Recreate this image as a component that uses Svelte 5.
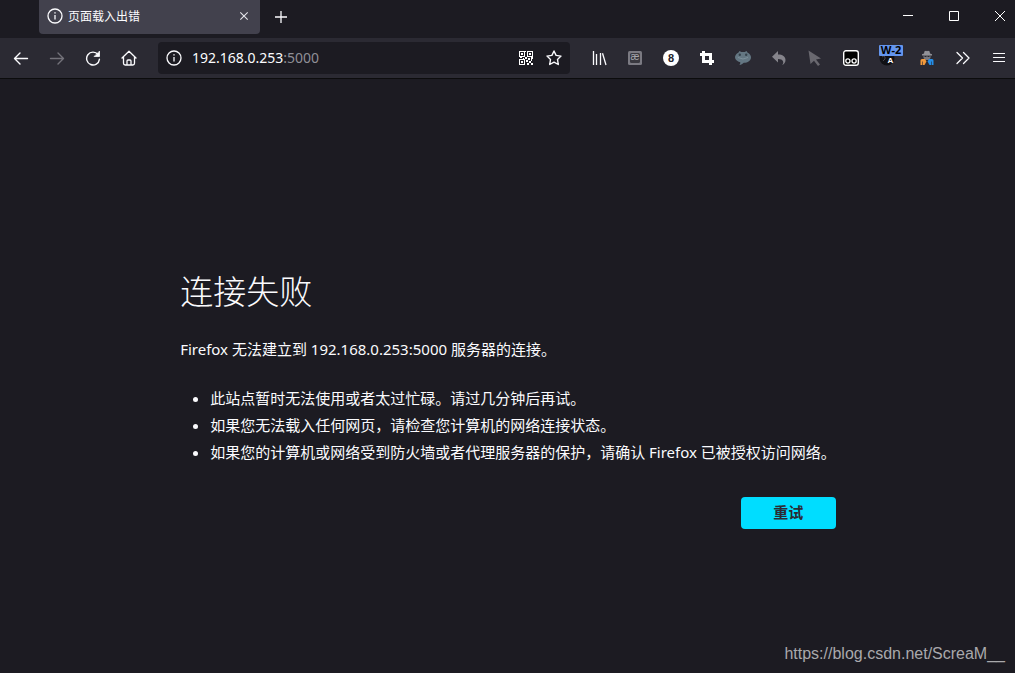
<script>
  const host = '192.168.0.253';
  const port = '5000';
  const reasons = [
    '此站点暂时无法使用或者太过忙碌。请过几分钟后再试。',
    '如果您无法载入任何网页，请检查您计算机的网络连接状态。',
    '如果您的计算机或网络受到防火墙或者代理服务器的保护，请确认 Firefox 已被授权访问网络。'
  ];
</script>

{#snippet info()}
  <svg width="16" height="16" viewBox="0 0 16 16" fill="none" stroke="#fbfbfe" aria-hidden="true">
    <circle cx="8" cy="8" r="7" stroke-width="1.3" />
    <path d="M8 7v4.5" stroke-width="1.3" />
    <path d="M8 4.2v1.4" stroke-width="1.4" />
  </svg>
{/snippet}

<div class="browser">
  <header>
    <div class="titlebar">
      <div class="tab">
        {@render info()}
        <span class="tab-title">页面载入出错</span>
        <button class="tab-close" aria-label="关闭标签页">
          <svg width="10" height="10" viewBox="0 0 10 10" stroke="#e4e4ea" stroke-width="1.1"><path d="M1.3 1.3l7.4 7.4M8.7 1.3L1.3 8.7" /></svg>
        </button>
      </div>
      <button class="new-tab" aria-label="新建标签页">
        <svg width="14" height="14" viewBox="0 0 14 14" stroke="#fbfbfe" stroke-width="1.3"><path d="M7 1v12M1 7h12" /></svg>
      </button>
      <div class="window-controls">
        <button aria-label="最小化"><svg width="10" height="10" viewBox="0 0 10 10" fill="#fff"><path d="M0 4h10v1H0z" /></svg></button>
        <button aria-label="最大化"><svg width="10" height="10" viewBox="0 0 10 10" fill="none" stroke="#fff"><path d="M.5.5h9v9h-9z" /></svg></button>
        <button class="close" aria-label="关闭"><svg width="10" height="10" viewBox="0 0 10 10" stroke="#fff"><path d="M0 0l10 10M10 0L0 10" /></svg></button>
      </div>
    </div>

    <nav class="toolbar" aria-label="导航">
      <div class="group nav-buttons">
        <button aria-label="后退"><svg width="16" height="16" viewBox="0 0 16 16" fill="none" stroke="#fbfbfe" stroke-width="1.4" stroke-linecap="round" stroke-linejoin="round"><path d="M14.5 8.500H1.5M7 3L1.5 8.500 7 14" /></svg></button>
        <button aria-label="前进" disabled><svg width="16" height="16" viewBox="0 0 16 16" fill="none" stroke="#73727a" stroke-width="1.4" stroke-linecap="round" stroke-linejoin="round"><path d="M1.5 8.500h13M9 3L14.5 8.500 9 14" /></svg></button>
        <button aria-label="重新载入"><svg width="16" height="16" viewBox="0 0 16 16" fill="none" stroke="#fbfbfe" stroke-width="1.4" stroke-linecap="round"><path d="M13 4.5A6.4 6.4 0 1 0 14.4 9.300" /><path d="M14.5 1.5v5h-5z" fill="#fbfbfe" stroke-width=".8" stroke-linejoin="round" /></svg></button>
        <button aria-label="主页"><svg width="16" height="16" viewBox="0 0 16 16" fill="none" stroke="#fbfbfe" stroke-width="1.3" stroke-linecap="round" stroke-linejoin="round"><path d="M1 8l7-6.8L15 8M2.5 7v6.3q0 1.7 1.7 1.7h7.6q1.7 0 1.7-1.7V7M6 15v-4q0-1 1-1h2q1 0 1 1v4" /></svg></button>
      </div>

      <div class="urlbar">
        {@render info()}
        <span class="address"><span class="host">{host}</span>:{port}</span>
        <button class="page-action" aria-label="二维码">
          <svg width="14" height="14" viewBox="0 0 14 14" fill="#fff" shape-rendering="crispEdges">
            <path fill-rule="evenodd" d="M0 0h6v6H0zM1 1v4h4V1zM8 0h6v6H8zM9 1v4h4V1zM0 8h6v6H0zM1 9v4h4V9z" />
            <path d="M2 2h2v2H2zM10 2h2v2h-2zM2 10h2v2H2zM6 0h1v1H6zM6 6h2v2H6zM1 6h2v1H1zM4 7h1v1H4zM9 7h2v2H9zM12 6h2v2h-2zM7 9h2v2H7zM10 10h2v2h-2zM12 8h1v2h-1zM8 12h2v2H8zM12 12h2v2h-2z" />
          </svg>
        </button>
        <button class="page-action" aria-label="添加书签">
          <svg width="16" height="16" viewBox="0 0 16 16" fill="none" stroke="#fbfbfe" stroke-width="1.4" stroke-linejoin="round"><path d="M8 1l2.1 4.4 4.9.7-3.5 3.4.8 5L8 12.1l-4.3 2.4.8-5L1 6.1l4.900-.7z" /></svg>
        </button>
      </div>

      <div class="group">
        <button aria-label="书库"><svg width="16" height="16" viewBox="0 0 16 16" fill="none" stroke="#fbfbfe" stroke-width="1.3"><path d="M2.500 1v14M5.500 4v11M9.500 3v12M11.500 3.2L15 15" /></svg></button>
        <button aria-label="词典">
          <svg width="14" height="14" viewBox="0 0 14 14"><rect width="14" height="14" rx="1.5" fill="#7b7a82" /><rect x="2" y="2" width="10" height="10" rx="1.500" fill="#39383f" /><text x="7" y="9" text-anchor="middle" font-size="10" fill="#a5a4ab" font-family="Liberation Sans">æ</text></svg>
        </button>
        <button aria-label="扩展 8">
          <svg width="16" height="16" viewBox="0 0 16 16"><circle cx="8" cy="8" r="8" fill="#fff" /><text x="8" y="12" text-anchor="middle" font-size="11" font-weight="700" fill="#222129" font-family="Liberation Sans">8</text></svg>
        </button>
        <button aria-label="截图"><svg width="14" height="14" viewBox="0 0 14 14" fill="none" stroke="#fff" stroke-width="3"><path d="M0 3.5h10.5V14M3.5 0v10.5H14" /></svg></button>
        <button aria-label="聊天"><svg width="16" height="16" viewBox="0 0 16 16"><path d="M4.500 1l1.800 1h3.400l1.800-1 1.200 1.700C14.700 3.700 16 5.300 16 7.200c0 3.200-3.200 5.500-7.200 5.600-1.200 1.200-2.600 2.100-4.400 2.300.7-.8 1-1.800.9-2.900C2.200 11.300 0 9.600 0 7.200c0-1.900 1.300-3.500 3.300-4.500z" fill="#647783" /><circle cx="4.800" cy="4.800" r="1.200" fill="#35424c" /><circle cx="11.200" cy="4.800" r="1.200" fill="#35424c" /><path d="M3 7.500q5 3 10 0" fill="none" stroke="#7d919c" /></svg></button>
        <button aria-label="撤销"><svg width="16" height="16" viewBox="0 0 16 16" fill="#85848b"><path d="M7 1v3.500c4.500 0 7.500 2 7.500 5.500 0 2.300-1.300 4.200-3.300 5 1-1.300 1.300-2.500.8-3.800C11.400 9.700 9.700 9 7 9v3.500L1 6.700z" /></svg></button>
        <button aria-label="手势"><svg width="16" height="16" viewBox="0 0 16 16" fill="#69686f"><path d="M1.500.5L14 8.500l-5 1 4 5-2 1.500-4-5.200L3.500 14z" /></svg></button>
        <button aria-label="脚本管理器"><svg width="16" height="16" viewBox="0 0 16 16"><rect x=".7" y=".7" width="14.600" height="14.600" rx="2.300" fill="#000" stroke="#fff" stroke-width="1.400" /><g fill="#000" stroke="#fff" stroke-width="1.300"><circle cx="4.900" cy="11" r="2.100" /><circle cx="11.100" cy="11" r="2.100" /></g></svg></button>
        <button class="badged" aria-label="翻译">
          <svg width="16" height="16" viewBox="0 0 16 16"><circle cx="8" cy="8" r="7.500" fill="#101014" /><path d="M3 7q2-2 3 0T4 11" stroke="#45454e" fill="none" /><text x="11.500" y="12.500" text-anchor="middle" font-size="8" font-weight="700" fill="#fff" font-family="Liberation Sans">A</text></svg>
          <span class="badge">W-2</span>
        </button>
        <button aria-label="代理身份"><svg width="16" height="16" viewBox="0 0 16 16"><path d="M5 3.500l.5-2.300 1.500-.5 1 .5 1-.5 1.500.5.5 2.300 2 .7v1.300H3V4.200z" fill="#929298" /><path d="M4.500 5.500h7v2.500L9.800 10H6.200L4.500 8z" fill="#77777e" /><path d="M5.500 6.500h2M8.500 6.500h2" stroke="#29282f" stroke-width="1.200" /><path d="M1.500 15v-4.500q0-1.500 1.500-1.500h3l1.500 2.500L5.500 15z" fill="#f39a3c" /><path d="M14.500 15v-4.500q0-1.500-1.500-1.500h-3l-1.500 2.500 2 3.500z" fill="#248ee8" /><path d="M3.500 11.500v3.500M12.500 11.500v3.500" stroke="#2a2930" stroke-width=".6" /></svg></button>
        <button aria-label="更多工具"><svg width="16" height="16" viewBox="0 0 16 16" fill="none" stroke="#fbfbfe" stroke-width="1.300" stroke-linecap="round" stroke-linejoin="round"><path d="M2 2.500L7.500 8 2 13.500M8.500 2.500L14 8l-5.500 5.500" /></svg></button>
        <button class="menu" aria-label="菜单"><svg width="14" height="12" viewBox="0 0 14 12" stroke="#fbfbfe" stroke-width="1.200" stroke-linecap="round"><path d="M2.500 1.500h11M2.500 5.500h11M2.500 9.500h11" /></svg></button>
      </div>
    </nav>
  </header>

  <main>
    <section class="error">
      <h1>连接失败</h1>
      <p>Firefox 无法建立到 {host}:{port} 服务器的连接。</p>
      <ul>
        {#each reasons as reason}
          <li>{reason}</li>
        {/each}
      </ul>
      <div class="actions"><button class="retry">重试</button></div>
    </section>
  </main>

  <footer>https://blog.csdn.net/ScreaM__</footer>
</div>

<style>
  :global(body) {
    margin: 0;
    background: #1c1b22;
  }
  .browser {
    display: flex;
    flex-direction: column;
    min-height: 100vh;
    background: #1c1b22;
    color: #fbfbfe;
    font: 15px/27px 'Noto Sans', 'Noto Sans CJK SC', sans-serif;
  }
  button {
    display: flex;
    align-items: center;
    justify-content: center;
    flex: none;
    margin: 0;
    padding: 0;
    border: 0;
    background: none;
    color: inherit;
    font: inherit;
  }
  svg {
    display: block;
    flex: none;
  }
  .titlebar {
    display: flex;
    align-items: flex-start;
    height: 38px;
    padding-left: 39px;
  }
  .tab {
    display: flex;
    align-items: center;
    box-sizing: border-box;
    width: 221px;
    height: 34px;
    padding: 0 8px 2px;
    border-radius: 0 0 4px 4px;
    background: #42414d;
    font-size: 12px;
    line-height: 20px;
  }
  .tab-title {
    flex: 1;
    padding: 2px 0 0 5px;
  }
  .tab-close {
    width: 16px;
    height: 16px;
  }
  .new-tab {
    width: 42px;
    height: 33px;
  }
  .window-controls {
    display: flex;
    margin-left: auto;
  }
  .window-controls button {
    box-sizing: border-box;
    width: 46px;
    height: 32px;
  }
  .window-controls .close {
    width: 38px;
    padding-left: 8px;
  }
  .toolbar {
    display: flex;
    align-items: center;
    height: 40px;
    background: #2b2a33;
    border-bottom: 1px solid #0c0c0d;
  }
  .group {
    display: flex;
  }
  .nav-buttons {
    padding-left: 3px;
  }
  .group button {
    width: 36px;
    height: 36px;
  }
  .urlbar {
    display: flex;
    flex: 1;
    align-items: center;
    box-sizing: border-box;
    min-width: 0;
    height: 32px;
    margin: 0 11px;
    padding: 0 2px 0 8px;
    border-radius: 4px;
    background: #1c1b22;
  }
  .address {
    flex: 1;
    padding-left: 10px;
    color: #8f8f96;
    font-size: 14px;
    line-height: 20px;
  }
  .host {
    color: #fbfbfe;
  }
  .page-action {
    width: 28px;
    height: 28px;
  }
  .group .badged {
    position: relative;
    width: 40px;
    padding-right: 4px;
  }
  .badge {
    position: absolute;
    top: 5px;
    left: 10px;
    width: 24px;
    height: 11px;
    border-radius: 1px;
    background: #6495ed;
    color: #000;
    font: 700 11px/10px 'Noto Sans', sans-serif;
    text-align: center;
  }
  .group .menu {
    width: 34px;
  }
  main {
    display: flex;
    flex: 1;
    align-items: center;
    justify-content: center;
    padding: 77px 48px 0 49px;
  }
  h1 {
    margin: 0 0 20px;
    font-size: 33px;
    font-weight: 300;
    line-height: 48px;
  }
  p {
    margin: 0;
  }
  ul {
    margin: 22px 0 31px;
    padding-left: 30px;
  }
  .actions {
    display: flex;
    justify-content: flex-end;
  }
  .retry {
    width: 95px;
    height: 32px;
    border-radius: 4px;
    background: #00ddff;
    color: #2b2a33;
    font-weight: 600;
  }
  footer {
    padding: 0 10px 6px;
    color: #a9a9ac;
    font: 16px/27px 'Liberation Sans', sans-serif;
    text-align: right;
  }
</style>
